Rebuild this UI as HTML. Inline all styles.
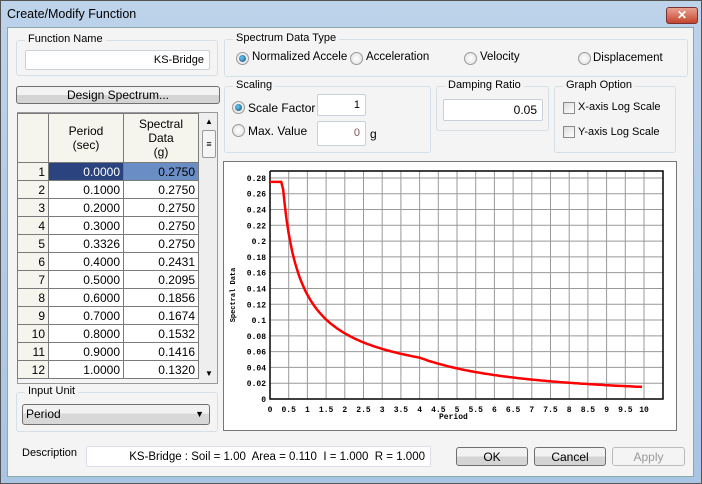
<!DOCTYPE html><html><head><style>
*{box-sizing:border-box;margin:0;padding:0}
body{width:702px;height:484px;overflow:hidden;font-family:"Liberation Sans",sans-serif;font-size:11px;color:#000;background:#fff}
.a{position:absolute}
#win{position:absolute;left:0;top:0;width:702px;height:484px;border:1px solid #555;background:linear-gradient(#bcd3ea,#a9c5e4)}
#body{position:absolute;left:7px;top:27px;width:687px;height:450px;background:#f4f4f4;border:1px solid #8aa}
.grp{position:absolute;border:1px solid #d5dfe5;border-radius:3px}
.gl{position:absolute;top:-8px;left:8px;background:#f4f4f4;padding:0 3px;font-size:11px}
.inp{position:absolute;background:#fff;border:1px solid #c9d0d8;border-radius:2px;text-align:right;padding-right:5px;font-size:11px}
.rad{position:absolute;width:13px;height:13px;border-radius:50%;border:1px solid #9a9a9a;background:radial-gradient(#fff,#ddd)}
.rad.on::after{content:"";position:absolute;left:2px;top:2px;width:7px;height:7px;border-radius:50%;background:radial-gradient(circle at 40% 40%,#6cf,#146)}
.chk{position:absolute;width:12px;height:12px;border:1px solid #8a8a8a;background:linear-gradient(135deg,#ddd,#fff)}
.btn{position:absolute;border:1px solid #707070;border-radius:3px;background:linear-gradient(#f2f2f2 50%,#d4d4d4 50%);text-align:center;font-size:12px}
table{border-collapse:collapse;position:absolute;left:17px;top:113px;font-size:12px}
td{border:1px solid #7a7a7a;height:18px;text-align:right;padding-right:3px;background:#fff}
td.h{background:#f5f4ed}
</style></head><body>
<div id="win">
<div class="a" style="left:6px;top:6px;font-size:12.5px">Create/Modify Function</div>
<div class="a" style="left:665px;top:6px;width:32px;height:17px;border:1px solid #733;border-radius:3px;background:linear-gradient(#e9a191,#c4452d);color:#fff;text-align:center;font-weight:bold;font-size:12px;line-height:15px">✕</div>
</div>
<div id="body"></div>
<div class="grp" style="left:16px;top:40px;width:202px;height:36px"><div class="gl">Function Name</div></div>
<div class="inp" style="left:25px;top:50px;width:185px;height:20px;line-height:18px">KS-Bridge</div>
<div class="grp" style="left:224px;top:39px;width:464px;height:38px"><div class="gl">Spectrum Data Type</div></div>
<div class="rad on" style="left:236px;top:52px"></div><div class="a" style="left:252px;top:51px;font-size:11.5px">Normalized Accele</div>
<div class="rad" style="left:350px;top:52px"></div><div class="a" style="left:366px;top:51px;font-size:11.5px">Acceleration</div>
<div class="rad" style="left:464px;top:52px"></div><div class="a" style="left:480px;top:51px;font-size:11.5px">Velocity</div>
<div class="rad" style="left:578px;top:52px"></div><div class="a" style="left:593px;top:52px;font-size:11.5px">Displacement</div>
<div class="btn" style="left:16px;top:86px;width:204px;height:18px;line-height:17px">Design Spectrum...</div>
<div class="grp" style="left:224px;top:86px;width:207px;height:67px"><div class="gl">Scaling</div></div>
<div class="rad on" style="left:232px;top:101px"></div><div class="a" style="left:248px;top:101px;font-size:12px">Scale Factor</div>
<div class="inp" style="left:317px;top:94px;width:49px;height:22px;line-height:20px">1</div>
<div class="rad" style="left:232px;top:124px"></div><div class="a" style="left:248px;top:124px;font-size:12px">Max. Value</div>
<div class="inp" style="left:317px;top:121px;width:49px;height:25px;line-height:23px;color:#855">0</div><div class="a" style="left:370px;top:127px;font-size:12px">g</div>
<div class="grp" style="left:436px;top:86px;width:113px;height:45px"><div class="gl">Damping Ratio</div></div>
<div class="inp" style="left:443px;top:99px;width:100px;height:22px;line-height:20px;font-size:12px">0.05</div>
<div class="grp" style="left:554px;top:86px;width:122px;height:67px"><div class="gl">Graph Option</div></div>
<div class="chk" style="left:563px;top:102px"></div><div class="a" style="left:578px;top:101px">X-axis Log Scale</div>
<div class="chk" style="left:563px;top:126px"></div><div class="a" style="left:578px;top:126px">Y-axis Log Scale</div>
<div class="a" style="left:17px;top:112px;width:201px;height:272px;background:#f4f4f4;border:1px solid #999;overflow:hidden">
<div class="a" style="left:181px;top:0;width:19px;height:272px;background:#eeeeee"></div>
<div class="a" style="left:187px;top:4px;font-size:8px">▲</div>
<div class="a" style="left:184px;top:17px;width:14px;height:28px;border:1px solid #999;border-radius:2px;background:#f5f5f5;text-align:center;font-size:9px;line-height:26px">≡</div>
<div class="a" style="left:187px;top:256px;font-size:8px">▼</div>
</div>
<table>
<tr><td class="h" style="width:31px;height:49px"></td><td class="h" style="width:75px;text-align:center;padding:0">Period<br>(sec)</td><td class="h" style="width:75px;text-align:center;padding:0">Spectral<br>Data<br>(g)</td></tr>
<tr><td class="h">1</td><td style="background:#2b437f;color:#fff">0.0000</td><td style="background:#6a8dc6">0.2750</td></tr>
<tr><td class="h">2</td><td>0.1000</td><td>0.2750</td></tr>
<tr><td class="h">3</td><td>0.2000</td><td>0.2750</td></tr>
<tr><td class="h">4</td><td>0.3000</td><td>0.2750</td></tr>
<tr><td class="h">5</td><td>0.3326</td><td>0.2750</td></tr>
<tr><td class="h">6</td><td>0.4000</td><td>0.2431</td></tr>
<tr><td class="h">7</td><td>0.5000</td><td>0.2095</td></tr>
<tr><td class="h">8</td><td>0.6000</td><td>0.1856</td></tr>
<tr><td class="h">9</td><td>0.7000</td><td>0.1674</td></tr>
<tr><td class="h">10</td><td>0.8000</td><td>0.1532</td></tr>
<tr><td class="h">11</td><td>0.9000</td><td>0.1416</td></tr>
<tr><td class="h">12</td><td>1.0000</td><td>0.1320</td></tr>
</table>
<div class="grp" style="left:16px;top:392px;width:202px;height:40px"><div class="gl">Input Unit</div></div>
<div class="a" style="left:22px;top:404px;width:188px;height:21px;border:1px solid #707070;border-radius:3px;background:linear-gradient(#f2f2f2 45%,#d8d8d8 45%);padding-left:3px;line-height:19px;font-size:12px">Period<span style="position:absolute;right:5px;font-size:9px">▼</span></div>
<svg class="a" style="left:223px;top:161px" width="454" height="270" id="ch"></svg>
<div class="a" style="left:22px;top:447px;font-size:11px">Description</div>
<div class="inp" style="left:86px;top:446px;width:345px;height:21px;line-height:20px;font-size:11.5px;padding-right:5px;border-color:#dde">KS-Bridge : Soil = 1.00&nbsp; Area = 0.110&nbsp; I = 1.000&nbsp; R = 1.000</div>
<div class="btn" style="left:456px;top:447px;width:72px;height:19px;line-height:18px">OK</div>
<div class="btn" style="left:534px;top:447px;width:72px;height:19px;line-height:18px">Cancel</div>
<div class="btn" style="left:612px;top:447px;width:73px;height:19px;line-height:18px;border-color:#bbb;background:#f4f4f4;color:#999">Apply</div>
<script>
var s='<rect x="0.5" y="0.5" width="453" height="269" fill="#fff" stroke="#777"/>';
var X=function(t){return 47+37.4*t},Y=function(v){return 238-v/0.02*15.79};
for(var i=1;i<=20;i++)s+='<line x1="'+X(i/2)+'" y1="10" x2="'+X(i/2)+'" y2="238" stroke="#999"/>';
for(var j=1;j<=14;j++)s+='<line x1="47" y1="'+Y(j*0.02)+'" x2="440" y2="'+Y(j*0.02)+'" stroke="#999"/>';
s+='<polyline points="47,10 47,238 440,238 440,10 47,10" fill="none" stroke="#000" stroke-width="1.5"/>';
var st='font-family:Liberation Mono,monospace;font-size:8px;font-weight:bold';
for(j=0;j<=14;j++){var v=+(j*0.02).toFixed(2);s+='<text x="43" y="'+(Y(j*0.02)+3)+'" text-anchor="end" style="'+st+'">'+v+'</text>';}
for(i=0;i<=20;i++)s+='<text x="'+X(i/2)+'" y="251" text-anchor="middle" style="'+st+'">'+(i/2)+'</text>';
s+='<text x="216" y="258" style="'+st+'">Period</text>';
s+='<text transform="translate(12,134) rotate(-90)" text-anchor="middle" style="'+st+';font-size:7px">Spectral Data</text>';
var p=[];for(var t=0;t<=10;t+=0.05){var v=t<=0.3326?0.275:0.275*Math.pow(0.3326/t,2/3);if(t>4)v=0.0524*Math.pow(4/t,1.35);p.push(X(t).toFixed(1)+','+Y(v).toFixed(1));}
s+='<polyline points="'+p.join(' ')+'" fill="none" stroke="#f00" stroke-width="2.5"/>';
document.getElementById('ch').innerHTML=s;
</script>
</body></html>
